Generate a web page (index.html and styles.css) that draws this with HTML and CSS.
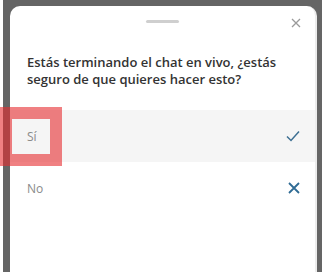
FILE: index.html
```html
<!DOCTYPE html>
<html lang="es">
<head>
  <meta charset="UTF-8">
  <meta name="viewport" content="width=device-width, initial-scale=1.0">
  <title>Terminar chat</title>
  <link rel="stylesheet" href="styles.css">
</head>
<body>
  <div class="phone">
    <div class="sheet">
      <div class="sheet-head">
        <span class="handle"></span>
        <button class="close" aria-label="Cerrar">
          <svg width="10" height="10" viewBox="0 0 10 10"><path d="M1 1L9 9M9 1L1 9" stroke="#9a9a9a" stroke-width="1.3" fill="none"/></svg>
        </button>
      </div>
      <p class="question">Estás terminando el chat en vivo, ¿estás seguro de que quieres hacer esto?</p>
      <ul class="options">
        <li class="option selected">
          <span>Sí</span>
          <svg width="14" height="12" viewBox="0 0 14 12"><path d="M1 6.5L5 10.5L13 1.5" stroke="#3d6f92" stroke-width="1.5" fill="none"/></svg>
        </li>
        <li class="option">
          <span>No</span>
          <svg width="12" height="12" viewBox="0 0 12 12"><path d="M1 1L11 11M11 1L1 11" stroke="#2f6b94" stroke-width="1.8" fill="none"/></svg>
        </li>
      </ul>
    </div>
    <div class="mark"></div>
  </div>
</body>
</html>
```

FILE: styles.css
```css
:root {
  --frame: #656565;
  --text: #333333;
  --muted: #8a8a8a;
  --mark: rgba(230, 43, 46, 0.6);
}
body {
  margin: 0;
  background: #ffffff;
  font-family: 'Open Sans', 'Noto Sans', Arial, sans-serif;
}
.phone {
  position: relative;
  margin-left: 3px;
  width: 319px;
  height: 272px;
  box-sizing: border-box;
  padding: 6px 5px 0 7px;
  background: var(--frame);
}
.sheet {
  height: 100%;
  background: #ffffff;
  border-radius: 10px 10px 0 0;
  border-right: 2px solid #ececec;
}
.sheet-head {
  position: relative;
  display: flex;
  justify-content: center;
  padding-top: 14px;
  height: 20px;
}
.handle {
  width: 33px;
  height: 3px;
  border-radius: 2px;
  background: #cfcfcf;
}
.close {
  position: absolute;
  right: 14px;
  top: 12px;
  padding: 0;
  border: none;
  background: none;
  line-height: 0;
}
.question {
  margin: 14px 0 0;
  padding: 0 20px 0 17px;
  font-size: 13px;
  font-weight: 600;
  line-height: 17px;
  color: var(--text);
}
.options {
  list-style: none;
  margin: 22px 0 0;
  padding: 0;
}
.option {
  display: flex;
  align-items: center;
  justify-content: space-between;
  height: 52px;
  padding: 0 15px 0 17px;
  font-size: 12px;
  color: var(--muted);
}
.option.selected { background: #f5f5f5; }
.mark {
  position: absolute;
  left: -3px;
  top: 107px;
  width: 38px;
  height: 35px;
  border: 12px solid var(--mark);
}
```
